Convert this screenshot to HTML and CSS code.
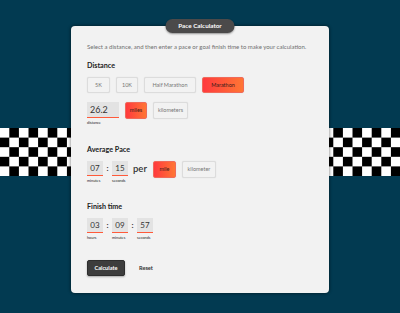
FILE: index.html
```html
<!DOCTYPE html>
<html>
<head>
<meta charset="utf-8">
<link rel="stylesheet" href="styles.css">
</head>
<body>
<div class="flag flag-left">
  <svg width="72" height="48" viewBox="0 0 72 48">
    <defs>
      <pattern id="chkL" patternUnits="userSpaceOnUse" x="-0.3" y="0" width="19.2" height="19.2">
        <rect width="19.2" height="19.2" fill="#fff"/>
        <rect x="9.6" y="0" width="9.6" height="9.6" fill="#000"/>
        <rect x="0" y="9.6" width="9.6" height="9.6" fill="#000"/>
      </pattern>
    </defs>
    <rect width="72" height="48" fill="url(#chkL)"/>
  </svg>
</div>
<div class="flag flag-right">
  <svg width="72" height="48" viewBox="0 0 72 48">
    <defs>
      <pattern id="chkR" patternUnits="userSpaceOnUse" x="-4.3" y="0" width="19.2" height="19.2">
        <rect width="19.2" height="19.2" fill="#fff"/>
        <rect x="9.6" y="0" width="9.6" height="9.6" fill="#000"/>
        <rect x="0" y="9.6" width="9.6" height="9.6" fill="#000"/>
      </pattern>
    </defs>
    <rect width="72" height="48" fill="url(#chkR)"/>
  </svg>
</div>
<div class="page">
  <div class="card">
    <div class="pill">Pace Calculator</div>
    <p class="intro">Select a distance, and then enter a pace or goal finish time to make your calculation.</p>

    <h2 class="heading">Distance</h2>
    <div class="choices">
      <button class="btn w-5k">5K</button>
      <button class="btn w-10k">10K</button>
      <button class="btn w-half">Half Marathon</button>
      <button class="btn w-full active">Marathon</button>
    </div>
    <div class="row dist-row">
      <div class="field">
        <div class="box wide">26.2</div>
        <div class="label">distance</div>
      </div>
      <div class="units">
        <button class="btn tall w-miles active">miles</button>
        <button class="btn tall w-km">kilometers</button>
      </div>
    </div>

    <h2 class="heading pace-h">Average Pace</h2>
    <div class="row">
      <div class="field">
        <div class="box">07</div>
        <div class="label">minutes</div>
      </div>
      <span class="colon">:</span>
      <div class="field">
        <div class="box">15</div>
        <div class="label">seconds</div>
      </div>
      <span class="per">per</span>
      <div class="units">
        <button class="btn tall w-mile active">mile</button>
        <button class="btn tall w-kilo">kilometer</button>
      </div>
    </div>

    <h2 class="heading finish-h">Finish time</h2>
    <div class="row">
      <div class="field">
        <div class="box">03</div>
        <div class="label">hours</div>
      </div>
      <span class="colon">:</span>
      <div class="field">
        <div class="box">09</div>
        <div class="label">minutes</div>
      </div>
      <span class="colon">:</span>
      <div class="field">
        <div class="box">57</div>
        <div class="label">seconds</div>
      </div>
    </div>

    <div class="actions">
      <button class="calc">Calculate</button>
      <button class="reset">Reset</button>
    </div>
  </div>
</div>
</body>
</html>
```

FILE: styles.css
```css
* { box-sizing: border-box; }
html, body { margin: 0; padding: 0; }
body {
  width: 400px;
  height: 313px;
  background: #023a51;
  font-family: Lato, "Open Sans", sans-serif;
  position: relative;
  overflow: hidden;
}
.flag {
  position: absolute;
  top: 128px;
  width: 72px;
  height: 48px;
  line-height: 0;
}
.flag svg { display: block; }
.flag-left { left: 0; }
.flag-right { left: 328px; }
.page {
  position: relative;
  padding-top: 26px;
}
.card {
  position: relative;
  width: 258px;
  height: 267px;
  margin: 0 auto;
  background: #f2f2f2;
  border-radius: 4px;
  box-shadow: 0 0 3px 1px rgba(0,0,0,0.35);
  padding: 17px 16px 0 16px;
}
.pill {
  position: absolute;
  top: -7px;
  left: 50%;
  transform: translateX(-50%);
  width: 69px;
  height: 14px;
  border-radius: 7px;
  background: #4b4a4a;
  color: #fff;
  font-size: 6.3px;
  font-weight: 700;
  line-height: 14px;
  text-align: center;
  box-shadow: 0 1px 2px rgba(0,0,0,0.4);
}
.intro {
  margin: 0;
  font-size: 6px;
  line-height: 8px;
  color: #707070;
}
.heading {
  margin: 10px 0 0 0;
  font-size: 7.2px;
  line-height: 9px;
  font-weight: 700;
  color: #222;
}
.choices {
  display: flex;
  gap: 6px;
  margin-top: 6.5px;
}
.btn {
  height: 16px;
  padding: 0;
  border: 1px solid #dcdcdc;
  border-radius: 2px;
  background: #f2f2f2;
  color: #777;
  font-family: inherit;
  font-size: 5.5px;
  box-shadow: 0 0 1px rgba(0,0,0,0.15);
  cursor: pointer;
  text-align: center;
}
.btn.active {
  background: linear-gradient(90deg, #ff3a3e, #ff7634);
  border-color: #f06a5a;
  color: #3a1a1a;
}
.btn.tall { height: 17px; }
.w-5k { width: 23px; }
.w-10k { width: 22px; }
.w-half { width: 52px; }
.w-full { width: 42px; }
.w-miles { width: 22px; }
.w-km { width: 35px; }
.w-mile { width: 23px; }
.w-kilo { width: 34px; }
.row {
  display: flex;
  align-items: flex-start;
  margin-top: 6.5px;
}
.dist-row { margin-top: 9px; }
.field {
  display: flex;
  flex-direction: column;
  align-items: flex-start;
}
.box {
  width: 16px;
  height: 15px;
  background: #e3e3e3;
  border-bottom: 1.5px solid #ff5a3a;
  font-size: 8px;
  line-height: 14px;
  color: #333;
  text-align: center;
}
.box.wide {
  width: 32px;
  height: 16px;
  font-size: 9px;
  text-align: left;
  padding-left: 3px;
  line-height: 16px;
}
.label {
  margin-top: 2px;
  font-size: 3.8px;
  line-height: 5px;
  color: #222;
}
.units {
  display: flex;
  gap: 6px;
  margin-left: 6px;
}
.colon {
  width: 9px;
  text-align: center;
  font-size: 8px;
  line-height: 15px;
  font-weight: 700;
  color: #333;
}
.per {
  margin-left: 5px;
  font-size: 9.5px;
  line-height: 15px;
  color: #333;
  font-weight: 600;
}
.pace-h { margin-top: 20.5px; }
.finish-h { margin-top: 19.5px; }
.actions {
  display: flex;
  align-items: center;
  gap: 14px;
  margin-top: 20px;
}
.calc {
  width: 38px;
  height: 16px;
  border: 1px solid #2e2e2e;
  border-radius: 2px;
  background: #3d3d3d;
  color: #fff;
  font-family: inherit;
  font-size: 5.6px;
  font-weight: 700;
  padding: 0;
  box-shadow: 0 1px 2px rgba(0,0,0,0.3);
}
.reset {
  border: 0;
  background: none;
  padding: 0;
  font-family: inherit;
  font-size: 5.6px;
  font-weight: 700;
  color: #333;
}
```
